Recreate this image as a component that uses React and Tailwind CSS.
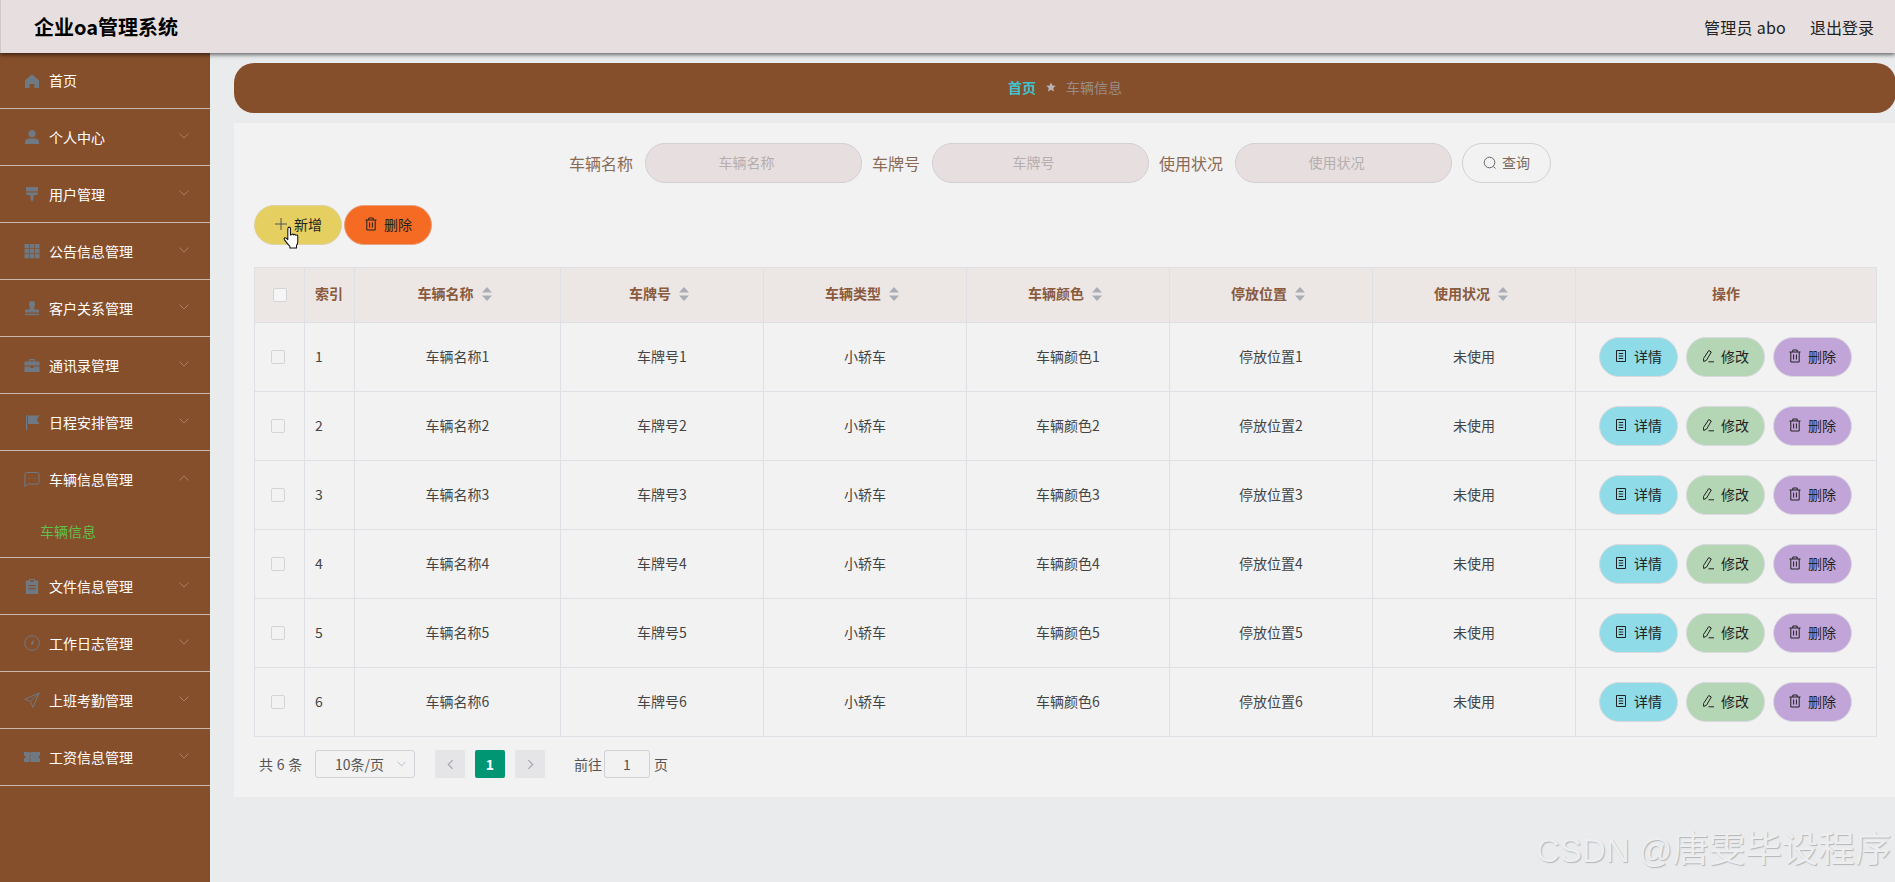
const menu = [
  { name: "个人中心", icon: "user" },
  { name: "用户管理", icon: "brush" },
  { name: "公告信息管理", icon: "grid" },
  { name: "客户关系管理", icon: "stamp" },
  { name: "通讯录管理", icon: "case" },
  { name: "日程安排管理", icon: "flag" },
  { name: "车辆信息管理", icon: "chat", open: true },
  { name: "文件信息管理", icon: "order" },
  { name: "工作日志管理", icon: "gauge" },
  { name: "上班考勤管理", icon: "send" },
  { name: "工资信息管理", icon: "ticket" },
];

const columns = ["车辆名称", "车牌号", "车辆类型", "车辆颜色", "停放位置", "使用状况"];
const rows = [1, 2, 3, 4, 5, 6];

function MenuIcon({ name }) {
  const fill = "#6f7984";
  return (
    <svg viewBox="0 0 16 16" className="w-4 h-4 shrink-0" fill={fill}>
      {name === "home" && <path d="M8 1.2 15 7.4V15h-4.6v-4H5.6v4H1V7.4z" />}
      {name === "user" && (
        <>
          <circle cx="8" cy="4.6" r="3.6" />
          <path d="M1 15v-1.800C1 10.600 3.200 9.600 5 9.600h6c1.800 0 4 1 4 3.600V15z" />
        </>
      )}
      {name === "brush" && <path d="M2 1h12v6.500c0 1-.5 1.500-1.500 1.500H10l-.6 1.400V14L8 15.500 6.600 14v-3.600L6 9H3.500C2.500 9 2 8.500 2 7.500zM2 5.500v1h12v-1z" />}
      {name === "grid" && (
        <>
          <rect x="0.5" y="1" width="4.500" height="4.300" />
          <rect x="5.700" y="1" width="4.500" height="4.300" />
          <rect x="10.900" y="1" width="4.600" height="4.300" />
          <rect x="0.500" y="6" width="4.500" height="4.300" />
          <rect x="5.700" y="6" width="4.500" height="4.300" />
          <rect x="10.900" y="6" width="4.600" height="4.300" />
          <rect x="0.500" y="11" width="4.500" height="4.300" />
          <rect x="5.700" y="11" width="4.500" height="4.300" />
          <rect x="10.900" y="11" width="4.600" height="4.300" />
        </>
      )}
      {name === "stamp" && (
        <>
          <path d="M8 1c2 0 3.200 1.300 3.200 3 0 1.700-1.200 2.500-1.200 4 0 .6.200 1 .6 1.400H14c.7 0 1 .4 1 1v2H1v-2c0-.6.300-1 1-1h3.400c.4-.4.600-.8.600-1.400 0-1.500-1.200-2.300-1.200-4C4.800 2.300 6 1 8 1z" />
          <rect x="1" y="13.800" width="14" height="1.400" />
        </>
      )}
      {name === "case" && <path d="M5 2h6v2.500h4.500v4h-15v-4H5zm1.300 1.200v1.300h3.400V3.200zM.5 9.500h6v1.500h3V9.500h6V15H.5z" />}
      {name === "flag" && <path d="M2 1h1.200v15H2zM4 1.500h11.500L12.800 5.800 15.500 10H4z" />}
      {name === "chat" && (
        <path
          fill="none"
          stroke={fill}
          strokeWidth="1"
          d="M2.500 1.500h11a1.500 1.500 0 0 1 1.500 1.500v8.500a1.500 1.500 0 0 1-1.500 1.500H4.500L.8 15.500 1 3a1.500 1.500 0 0 1 1.500-1.500zM4.800 7.200h.8M7.600 7.200h.8M10.400 7.200h.8"
        />
      )}
      {name === "order" && <path d="M5 1h6v1.500h3.200V16H1.800V2.500H5zm1.200 1v1.800h3.600V2zM4.500 7v1.200h7V7zm0 3v1.200h7V10z" />}
      {name === "gauge" && (
        <>
          <circle cx="8" cy="8" r="7.300" fill="none" stroke={fill} strokeWidth="1" />
          <path d="M10.800 3.800 9 9.200a1.300 1.300 0 0 1-2.200-1z" />
        </>
      )}
      {name === "send" && <path fill="none" stroke={fill} strokeWidth="1" strokeLinejoin="round" d="M15.200 1 .8 7.200 6.400 9.400 9 15.400zM6.400 9.400 15.200 1" />}
      {name === "ticket" && <path d="M0 3h5.500v1.500h1V3H16v3.500c-1 .2-1.500.8-1.500 1.500s.5 1.300 1.500 1.500V13H6.500v-1.500h-1V13H0V9.500c1-.2 1.500-.8 1.500-1.500S1 6.700 0 6.500zm5.500 3v1.500h1V6zm0 3v1.500h1V9z" />}
    </svg>
  );
}

function Chevron({ up }) {
  return (
    <svg viewBox="0 0 10 6" className="w-[10px] h-[6px] absolute right-[21px] top-[24px]" fill="none" stroke="#a37d64" strokeWidth="1">
      <path d={up ? "M.5 5.500 5 1l4.500 4.500" : "M.5.500 5 5 9.500.500"} />
    </svg>
  );
}

function TrashIcon() {
  return (
    <svg viewBox="0 0 14 14" className="w-[14px] h-[14px]" fill="none" stroke="currentColor" strokeWidth="1">
      <path d="M1.500 3h11M4.800 3V1h4.400v2M2.800 3v10h8.400V3M5.600 5.500v5M8.400 5.500v5" />
    </svg>
  );
}

function DocIcon() {
  return (
    <svg viewBox="0 0 14 14" className="w-[14px] h-[14px]" fill="none" stroke="currentColor" strokeWidth="1">
      <path d="M2.500 1.500h9v11h-9zM4.800 4.500h4.400M4.800 7h4.400M4.800 9.500h4.400" />
    </svg>
  );
}

function EditIcon() {
  return (
    <svg viewBox="0 0 14 14" className="w-[14px] h-[14px]" fill="none" stroke="currentColor" strokeWidth="1">
      <path d="M7.800 1.500 10.300 3 5.500 11.200l-2.800 1.300-.2-3zM7.500 12.800h5.500" />
    </svg>
  );
}

function SortCaret() {
  return (
    <svg viewBox="0 0 10 14" className="w-[10px] h-[14px] inline-block ml-[8px] align-[-2px]" fill="#a9adb5">
      <path d="M5 0 10 5.500H0zM5 14 0 8.500h10z" />
    </svg>
  );
}

function Checkbox({ className }) {
  return <span className={`inline-block w-[14px] h-[14px] border border-[#d4d4d8] rounded-[2px] ${className}`} />;
}

function ActionButton({ bg, icon, label }) {
  return (
    <button className={`w-[79px] h-10 rounded-[20px] border border-[#d8d8de] flex items-center justify-center gap-[6px] pb-[2px] text-[14px] text-[#222] ${bg}`}>
      {icon}
      {label}
    </button>
  );
}

function SearchField({ label }) {
  return (
    <>
      <span className="text-base text-[#8a6b56] mr-3">{label}</span>
      <div className="w-[217px] h-10 rounded-[20px] bg-[#e7dfdf] border border-[#d2cfd5] flex items-center justify-center pr-[14px] pb-[2px] text-[14px] text-[#b5aeae]">
        {label}
      </div>
    </>
  );
}

export default function App() {
  return (
    <div className="relative w-[1895px] h-[882px] overflow-hidden bg-[#e9ebed] font-['Noto_Sans_CJK_SC',sans-serif]">
      <header className="relative z-10 h-[53px] bg-[#e7dfdf] border-l border-[#cfc9c9] flex items-center justify-between pl-[33px] pr-[21px] shadow-[0_2px_4px_rgba(0,0,0,0.55)]">
        <span className="text-xl font-bold text-black">企业oa管理系统</span>
        <div className="flex gap-6 text-base text-[#222]">
          <span className="tracking-[0.25px]">管理员 abo</span>
          <span>退出登录</span>
        </div>
      </header>

      <div className="flex h-[829px]">
        <aside className="w-[210px] shrink-0 bg-[#864f2b] text-[14px] text-white">
          <div className="h-[56px] border-b border-[#c9b9ae] flex items-center gap-[9px] pl-[24px]">
            <MenuIcon name="home" />
            首页
          </div>
          {menu.map((item) => (
            <div key={item.name} className="border-b border-[#c9b9ae]">
              <div className="relative h-[56px] flex items-center gap-[9px] pl-[24px]">
                <MenuIcon name={item.icon} />
                {item.name}
                <Chevron up={item.open} />
              </div>
              {item.open && <div className="h-[50px] flex items-center pl-[40px] pb-[2px] text-[#5fc04b]">车辆信息</div>}
            </div>
          ))}
        </aside>

        <main className="flex-1 pl-6 pt-[10px]">
          <div className="h-[50px] rounded-[20px] bg-[#864f2b] flex items-center justify-center text-[14px] gap-[10px] pb-[2px]">
            <span className="font-bold text-[#3fc3cf]">首页</span>
            <svg viewBox="0 0 12 12" className="w-[10px] h-[10px]" fill="#b9b4b6">
              <path d="M6 .5 7.700 4.200l4 .4-3 2.700.9 4L6 9.200 2.400 11.300l.9-4-3-2.700 4-.4z" />
            </svg>
            <span className="text-[#9a8d88]">车辆信息</span>
          </div>

          <section className="relative mt-[10px] h-[674px] bg-[#f2f2f2] pl-5 pr-[19px] pt-5">
            <div className="flex items-center justify-center h-10 pr-[11px]">
              <SearchField label="车辆名称" />
              <div className="w-[10px]" />
              <SearchField label="车牌号" />
              <div className="w-[10px]" />
              <SearchField label="使用状况" />
              <button className="ml-[10px] w-[89px] h-10 rounded-[20px] border border-[#d2cfd5] bg-[#f2f2f2] flex items-center justify-center gap-[5px] pb-[1px] text-[14px] text-[#7a6a60]">
                <svg viewBox="0 0 14 14" className="w-[14px] h-[14px]" fill="none" stroke="#666" strokeWidth="1">
                  <circle cx="6.500" cy="6.500" r="5.300" />
                  <path d="M10.500 10.500 12.500 12.500" />
                </svg>
                查询
              </button>
            </div>

            <div className="relative flex gap-[2px] mt-[22px] ml-0">
              <button className="w-[88px] h-10 rounded-[20px] bg-[#e5cf61] border border-[#dcd2a4] flex items-center justify-center gap-[6px] pb-[2px] text-[14px] text-[#222]">
                <svg viewBox="0 0 14 14" className="w-[14px] h-[14px]" fill="none" stroke="#555" strokeWidth="1">
                  <path d="M7 1v12M1 7h12" />
                </svg>
                新增
              </button>
              <button className="w-[88px] h-10 rounded-[20px] bg-[#f56b23] border border-[#e6a283] flex items-center justify-center gap-[6px] pb-[2px] text-[14px] text-[#222]">
                <TrashIcon />
                删除
              </button>
              <svg viewBox="0 0 17 22" className="absolute left-[29px] top-[21px] w-[18px] h-[23px]" fill="#fff" stroke="#111" strokeWidth="1" strokeLinejoin="round">
                <path d="M5 1.500c.8-.8 2-.4 2 .8v6.200l1.200-.2c.5-1 1.800-.8 2 .2.600-.8 1.800-.5 1.900.4.700-.6 1.800-.2 1.900.8v5.300c0 1.500-.5 2.600-1.200 3.500V21H6.500v-1.500C5 18 3 15.500 1.200 13c-.8-1.200.6-2.400 1.700-1.400L4.500 13V2.500z" />
              </svg>
            </div>

            <table className="mt-[22px] w-[1622px] table-fixed border-collapse text-[14px] text-[#444]">
              <colgroup>
                <col className="w-[50px]" />
                <col className="w-[50px]" />
                <col className="w-[206px]" />
                <col className="w-[203px]" />
                <col className="w-[203px]" />
                <col className="w-[203px]" />
                <col className="w-[203px]" />
                <col className="w-[203px]" />
                <col className="w-[301px]" />
              </colgroup>
              <thead>
                <tr className="h-[55px] bg-[#ece7e5] text-[#8a5a3c] font-bold">
                  <th className="border border-[#dfe0e6] text-center pb-[3px]">
                    <Checkbox className="bg-[#f6f5f5] align-middle" />
                  </th>
                  <th className="border border-[#dfe0e6] text-left pl-[10px] pb-[3px]">索引</th>
                  {columns.map((c) => (
                    <th key={c} className="border border-[#dfe0e6] text-center pr-[6px] pb-[3px]">
                      {c}
                      <SortCaret />
                    </th>
                  ))}
                  <th className="border border-[#dfe0e6] text-center pb-[3px]">操作</th>
                </tr>
              </thead>
              <tbody>
                {rows.map((n) => (
                  <tr key={n} className="h-[69px]">
                    <td className="border border-[#dfe0e6] pr-1 pb-[4px] text-center">
                      <Checkbox className="align-middle" />
                    </td>
                    <td className="border border-[#dfe0e6] pl-[10px] pb-[2px]">{n}</td>
                    <td className="border border-[#dfe0e6] pb-[2px] text-center">车辆名称{n}</td>
                    <td className="border border-[#dfe0e6] pb-[2px] text-center">车牌号{n}</td>
                    <td className="border border-[#dfe0e6] pb-[2px] text-center">小轿车</td>
                    <td className="border border-[#dfe0e6] pb-[2px] text-center">车辆颜色{n}</td>
                    <td className="border border-[#dfe0e6] pb-[2px] text-center">停放位置{n}</td>
                    <td className="border border-[#dfe0e6] pb-[2px] text-center">未使用</td>
                    <td className="border border-[#dfe0e6]">
                      <div className="flex justify-center gap-2 pr-[2px]">
                        <ActionButton bg="bg-[#8fdce8]" icon={<DocIcon />} label="详情" />
                        <ActionButton bg="bg-[#b5d6b4]" icon={<EditIcon />} label="修改" />
                        <ActionButton bg="bg-[#c1a5d9]" icon={<TrashIcon />} label="删除" />
                      </div>
                    </td>
                  </tr>
                ))}
              </tbody>
            </table>

            <div className="flex items-center h-[28px] mt-[13px] pl-[5px] text-[14px] text-[#555]">
              <span className="w-[56px] whitespace-pre tracking-[0.3px]">共 6 条</span>
              <div className="relative w-[100px] h-[28px] border border-[#d0d2d8] rounded-[3px] flex items-center pl-[19px]">
                10条/页
                <svg viewBox="0 0 10 6" className="absolute right-[8px] top-[10px] w-[9px] h-[6px]" fill="none" stroke="#b8bac0" strokeWidth="1">
                  <path d="M.5.500 5 5 9.500.500" />
                </svg>
              </div>
              <div className="ml-[20px] w-[30px] h-[28px] rounded-[2px] bg-[#e5e5e7] flex items-center justify-center">
                <svg viewBox="0 0 8 12" className="w-[7px] h-[11px]" fill="none" stroke="#a8abb2" strokeWidth="1.500">
                  <path d="M6.500 1 1.500 6l5 5" />
                </svg>
              </div>
              <div className="ml-[10px] w-[30px] h-[28px] rounded-[2px] bg-[#009674] text-white font-bold flex items-center justify-center">1</div>
              <div className="ml-[10px] w-[30px] h-[28px] rounded-[2px] bg-[#e5e5e7] flex items-center justify-center">
                <svg viewBox="0 0 8 12" className="w-[7px] h-[11px]" fill="none" stroke="#a8abb2" strokeWidth="1.500">
                  <path d="M1.500 1 6.500 6l-5 5" />
                </svg>
              </div>
              <span className="ml-[29px]">前往</span>
              <div className="ml-[2px] w-[46px] h-[28px] border border-[#d0d2d8] rounded-[3px] flex items-center justify-center">1</div>
              <span className="ml-[4px]">页</span>
            </div>
          </section>
        </main>
      </div>

      <span className="absolute left-[1536px] top-[825px] leading-[50px] whitespace-pre font-['Liberation_Sans','Noto_Sans_CJK_SC',sans-serif] text-[#eceef0] [text-shadow:1px_1px_1px_#b4b6b8]">
        <span className="text-[33px]">CSDN @</span>
        <span className="text-[36.5px]">唐雯毕设程序</span>
      </span>
    </div>
  );
}
